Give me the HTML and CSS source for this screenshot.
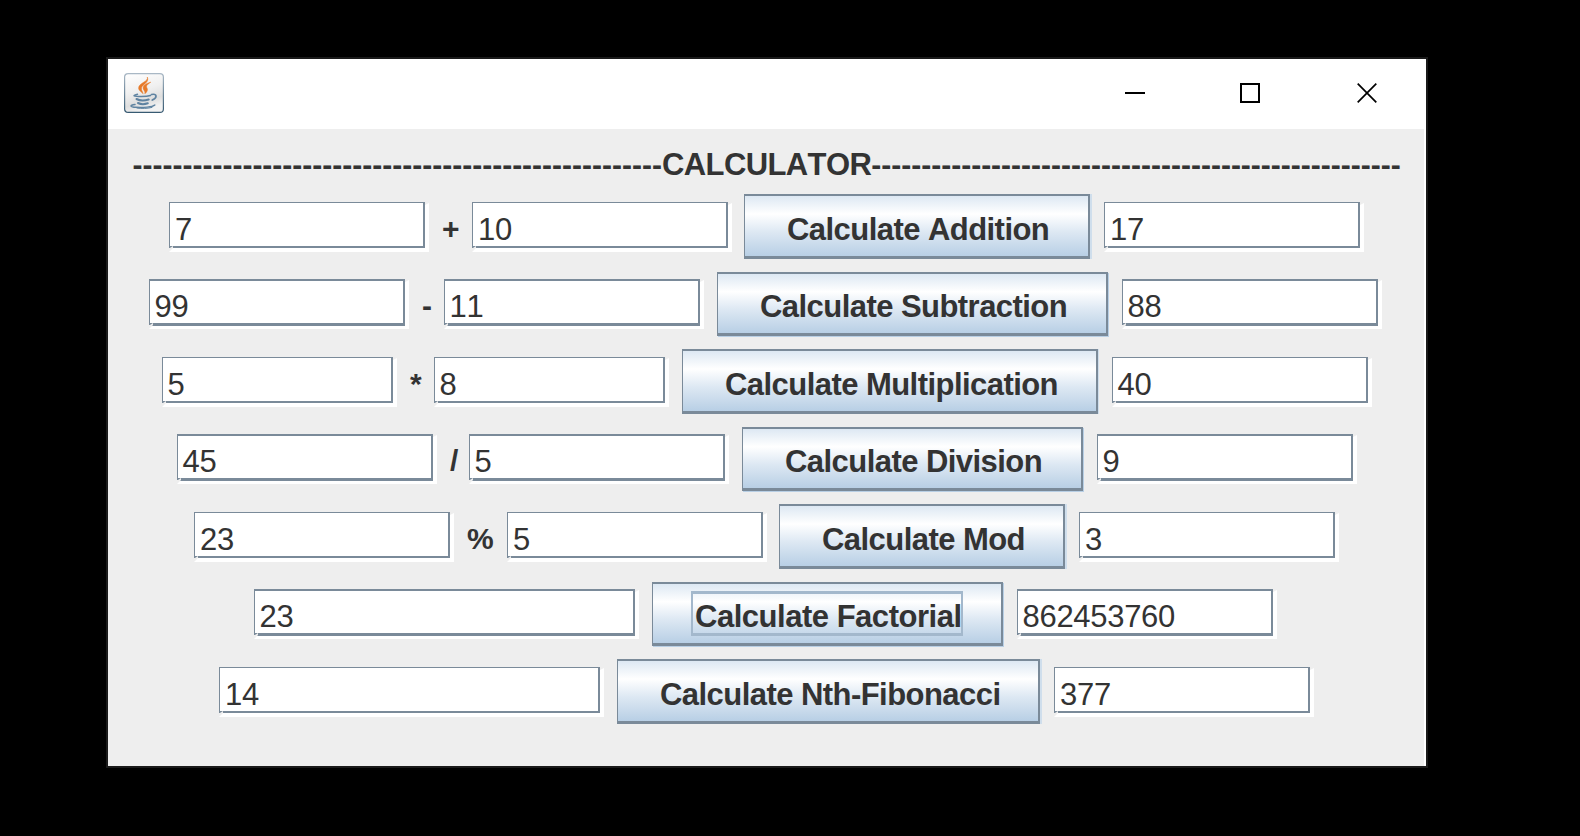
FILE: index.html
```
<!DOCTYPE html>
<html lang="en">
<head>
<meta charset="utf-8">
<title>Calculator</title>
<link rel="stylesheet" href="styles.css">
</head>
<body>
<main class="window">
  <header class="titlebar">
    <svg class="app-icon" viewBox="0 0 40 40" aria-hidden="true">
      <defs>
        <linearGradient id="tile" x1="0" y1="0" x2="0.3" y2="1"><stop offset="0" stop-color="#fff"/><stop offset="0.5" stop-color="#f0f0f0"/><stop offset="0.8" stop-color="#dedede"/><stop offset="1" stop-color="#f2f2f2"/></linearGradient>
        <linearGradient id="edge" x1="0" y1="0" x2="0" y2="1"><stop offset="0" stop-color="#a9b8c5"/><stop offset="1" stop-color="#375a72"/></linearGradient>
      </defs>
      <rect x="0.6" y="0.6" width="38.8" height="38.8" rx="3.5" fill="url(#tile)" stroke="url(#edge)" stroke-width="1.2"/>
      <g fill="#e77a2a" stroke="#e77a2a" stroke-width=".5" stroke-linejoin="round">
        <path d="M23.300 4C25 8.500 14.600 10 14.600 15c0 2.600 2.800 3.800 4.600 5.800C18.300 17.800 17 17 17.600 14.600 18.500 11.500 25.800 9.300 23.300 4Z"/>
        <path d="M26.800 9.200C22.500 10.300 18.800 12.200 19.100 15.200c.2 2 2.400 2.800 1.800 5.600 2.200-2 3.200-3.800 2.200-5.600C21.600 12.700 23.500 11.300 26.800 9.200Z"/>
      </g>
      <g fill="none" stroke="#5f83a1" stroke-linecap="round">
        <path d="M13.500 21.300C8.500 22.400 9 23.300 14.500 23.500c5 .2 9.500-.2 12-1" stroke-width="1.500"/>
        <path d="M12.500 26c3 1.600 8.800 1.500 12.200.5" stroke-width="2"/>
        <path d="M14 30c2.800 1.400 6.800 1.300 9.800.3" stroke-width="2"/>
        <path d="M27.500 21.500c5.500-1.300 6.200 3 .8 5.600" stroke-width="1.700"/>
        <path d="M11 31.500C5 32.400 6.200 33.900 12 34.300c7 .5 16.500-.2 18.800-2.300" stroke-width="1.500"/>
        <path d="M13 35c4.500.7 11 .6 15-.6" stroke-width="1"/>
      </g>
    </svg>
    <nav class="caption">
      <svg class="glyph" viewBox="0 0 20 20"><path d="M0 10H20" stroke="#000" stroke-width="2"/></svg>
      <svg class="glyph" viewBox="0 0 20 20"><rect x="1" y="1" width="18" height="18" fill="none" stroke="#000" stroke-width="2"/></svg>
      <svg class="glyph" viewBox="0 0 20 20"><path d="M.7.7 19.300 19.300M19.300.7.7 19.300" stroke="#000" stroke-width="1.700"/></svg>
    </nav>
  </header>
  <section class="panel">
    <h1 class="heading">-----------------------------------------------------<span class="word">CALCULATOR</span>-----------------------------------------------------</h1>
    <div class="row addition">
      <div class="field"><span class="value">7</span></div><span class="op">+</span>
      <div class="field"><span class="value">10</span></div>
      <button class="button">Calculate Addition</button>
      <div class="field"><span class="value">17</span></div>
    </div>
    <div class="row even subtraction">
      <div class="field"><span class="value">99</span></div><span class="op">-</span>
      <div class="field"><span class="value">11</span></div>
      <button class="button">Calculate Subtraction</button>
      <div class="field"><span class="value">88</span></div>
    </div>
    <div class="row multiplication">
      <div class="field"><span class="value">5</span></div><span class="op">*</span>
      <div class="field"><span class="value">8</span></div>
      <button class="button">Calculate Multiplication</button>
      <div class="field"><span class="value">40</span></div>
    </div>
    <div class="row even division">
      <div class="field"><span class="value">45</span></div><span class="op">/</span>
      <div class="field"><span class="value">5</span></div>
      <button class="button">Calculate Division</button>
      <div class="field"><span class="value">9</span></div>
    </div>
    <div class="row modulo">
      <div class="field"><span class="value">23</span></div><span class="op">%</span>
      <div class="field"><span class="value">5</span></div>
      <button class="button">Calculate Mod</button>
      <div class="field"><span class="value">3</span></div>
    </div>
    <div class="row even factorial">
      <div class="field"><span class="value">23</span></div><span class="op"></span>
      <button class="button focused">Calculate Factorial</button>
      <div class="field"><span class="value">862453760</span></div>
    </div>
    <div class="row fibonacci">
      <div class="field"><span class="value">14</span></div><span class="op"></span>
      <button class="button">Calculate Nth-Fibonacci</button>
      <div class="field"><span class="value">377</span></div>
    </div>
  </section>
</main>
</body>
</html>
```

FILE: styles.css
```
*, *::after { box-sizing: border-box; }

body {
  margin: 0;
  padding: 57px 0 0 106px;
  height: 836px;
  overflow: hidden;
  background: #000;
  color: #333;
  font: 31px/34px "Liberation Sans", Arial, sans-serif;
  font-kerning: none;
}

.window {
  width: 1322px;
  height: 711px;
  border: 2px solid #1a1a1a;
  background: #fff;
}

.titlebar {
  display: flex;
  justify-content: space-between;
  height: 70px;
  padding: 14px 49px 0 16px;
}

.app-icon { width: 40px; height: 40px; }

.caption { display: flex; gap: 95px; padding-top: 10px; }
.caption .glyph:last-child { margin-left: 2px; }
.glyph { width: 20px; height: 20px; }

.panel {
  width: 1316px;
  height: 637px;
  padding-top: 19px;
  background: #eee;
}

.heading {
  height: 34px;
  margin: 0 0 12px;
  padding-left: 24.500px;
  font-size: 30px;
  line-height: 34px;
  font-weight: bold;
  white-space: nowrap;
}
.word { font-size: 31px; line-height: 1; letter-spacing: -.6px; }

.row {
  display: grid;
  align-items: start;
  height: 65px;
  margin-bottom: 13px;
}
.row.even { margin-bottom: 12px; }

.addition { padding-left: 61px; grid-template-columns: 260px 43px 272px 360px 260px; }
.subtraction { padding-left: 41px; grid-template-columns: 260px 35px 273px 405px 260px; }
.multiplication { padding-left: 54px; grid-template-columns: 235px 37px 248px 430px 260px; }
.division { padding-left: 69px; grid-template-columns: 260px 32px 273px 355px 260px; }
.modulo { padding-left: 86px; grid-template-columns: 260px 53px 272px 300px 260px; }
.factorial { padding-left: 146px; grid-template-columns: 385px 13px 365px 260px; }
.fibonacci { padding-left: 111px; grid-template-columns: 385px 13px 437px 260px; }

/* Etched field: grey frame, white highlight along the right and bottom */
.field {
  width: 260px;
  height: 50px;
  margin-top: 8px;
  padding: 0 4px 4px 0;
  background: #fff;
  clip-path: polygon(0 0, calc(100% - 4px) 0, calc(100% - 4px) 3px, 100% 1px, 100% 100%, 0 100%, 4px 46px, 4px 44px, 1px 46px, 0 46px);
}
.multiplication .field:not(:last-child) { width: 235px; }
.factorial .field:first-child, .fibonacci .field:first-child { width: 385px; }

.value {
  display: block;
  height: 46px;
  padding: 10px 0 0 5px;
  border: 1px solid #7a8a99;
  border-width: 1px 2px 2px 1px;
  letter-spacing: -.3px;
}
.even .field { margin-top: 7px; padding-bottom: 3px; }
.even .value { height: 47px; padding: 9px 0 0 4.500px; border-width: 2px 2px 3px 1px; }
.multiplication .value { padding-left: 4.500px; }

.op { padding: 18px 0 0 13px; font-size: 30px; font-weight: bold; }
.even .op { padding-top: 17px; }

.button {
  position: relative;
  height: 65px;
  margin: 0 14px 0 0;
  padding: 17px 0 0 42px;
  border: 1px solid #7a8a99;
  border-width: 2px 2px 3px 1px;
  border-radius: 0;
  background: linear-gradient(#dde8f3, #fff 30%, #dde8f3 60%, #b8cfe5);
  box-shadow: 2px 0 #cfdeec;
  color: #333;
  font: bold 31px/34px "Liberation Sans", Arial, sans-serif;
  font-kerning: none;
  letter-spacing: -.55px;
  text-align: left;
  white-space: nowrap;
  display: flex;
  align-items: flex-start;
}
.even .button { height: 64px; padding-top: 16px; box-shadow: 1px 1px #b8cfe5; }
.multiplication .button { box-shadow: 1px 0 #cfdeec; }
.factorial .button { letter-spacing: -.48px; }

.focused::after {
  content: "";
  position: absolute;
  left: 38px;
  top: 7px;
  width: 272px;
  height: 45px;
  border: 2px solid #a3b8cc;
  border-width: 3px 2px;
}
```
